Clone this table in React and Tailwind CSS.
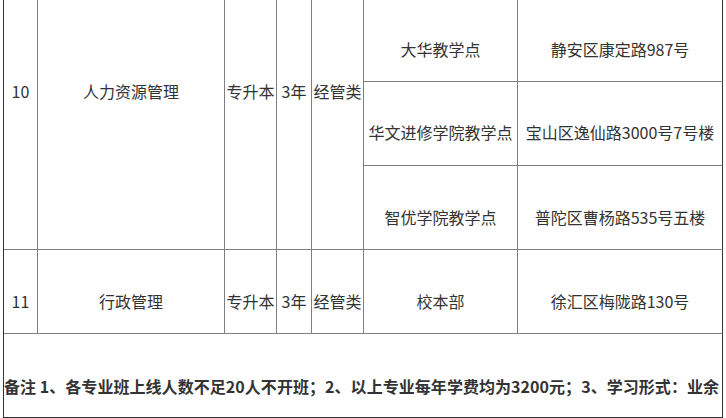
import React from "react";

const font = { fontFamily: '"Noto Sans CJK SC", "Noto Sans", sans-serif' };

function Cell({ className = "", children }) {
  return (
    <div
      className={
        "flex justify-center items-start whitespace-nowrap overflow-hidden text-[16px] leading-[24px] text-[#333] border-b border-r border-[#808080] " +
        className
      }
    >
      {children}
    </div>
  );
}

export default function App() {
  return (
    <div className="w-[726px] h-[418px] bg-white overflow-hidden" style={font}>
      <div className="ml-[3px] w-[720px] grid grid-cols-[34px_187px_52px_35px_52px_154px_205px] grid-rows-[82px_84px_84px_84px_84px] border-l border-[#333]">
        {/* Row 10 merged cells */}
        <Cell className="row-span-3 col-start-1 row-start-1 pt-[79px]">10</Cell>
        <Cell className="row-span-3 col-start-2 row-start-1 pt-[79px]">人力资源管理</Cell>
        <Cell className="row-span-3 col-start-3 row-start-1 pt-[79px]">专升本</Cell>
        <Cell className="row-span-3 col-start-4 row-start-1 pt-[79px]">3年</Cell>
        <Cell className="row-span-3 col-start-5 row-start-1 pt-[79px]">经管类</Cell>

        <Cell className="col-start-6 row-start-1 pt-[37px]">大华教学点</Cell>
        <Cell className="col-start-7 row-start-1 pt-[37px] border-r-[#333]">静安区康定路987号</Cell>

        <Cell className="col-start-6 row-start-2 pt-[38px]">华文进修学院教学点</Cell>
        <Cell className="col-start-7 row-start-2 pt-[38px] border-r-[#333]">宝山区逸仙路3000号7号楼</Cell>

        <Cell className="col-start-6 row-start-3 pt-[39px]">智优学院教学点</Cell>
        <Cell className="col-start-7 row-start-3 pt-[39px] border-r-[#333]">普陀区曹杨路535号五楼</Cell>

        {/* Row 11 */}
        <Cell className="col-start-1 row-start-4 pt-[39px]">11</Cell>
        <Cell className="col-start-2 row-start-4 pt-[39px]">行政管理</Cell>
        <Cell className="col-start-3 row-start-4 pt-[39px]">专升本</Cell>
        <Cell className="col-start-4 row-start-4 pt-[39px]">3年</Cell>
        <Cell className="col-start-5 row-start-4 pt-[39px]">经管类</Cell>
        <Cell className="col-start-6 row-start-4 pt-[39px]">校本部</Cell>
        <Cell className="col-start-7 row-start-4 pt-[39px] border-r-[#333]">徐汇区梅陇路130号</Cell>

        {/* Remarks */}
        <div className="col-span-7 row-start-5 flex items-start justify-start whitespace-nowrap overflow-hidden text-[16px] leading-[24px] font-bold tracking-[0.05px] text-[#333] pt-[40px] border-r border-b border-[#333]">
          备注 1、各专业班上线人数不足20人不开班；2、以上专业每年学费均为3200元；3、学习形式：业余
        </div>
      </div>
    </div>
  );
}
